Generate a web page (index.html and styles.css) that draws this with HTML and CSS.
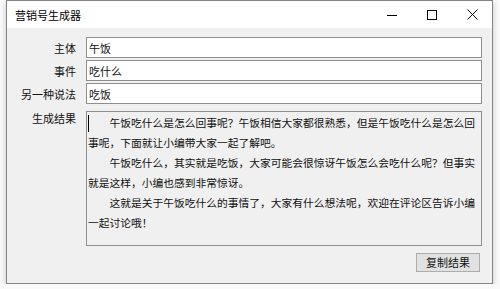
FILE: index.html
```html
<!DOCTYPE html>
<html lang="zh-CN">
<head>
<meta charset="utf-8">
<title>营销号生成器</title>
<link rel="stylesheet" href="styles.css">
</head>
<body>
<div class="window">
  <div class="titlebar">
    <div class="title">营销号生成器</div>
    <div class="controls">
      <div class="ctl"><svg width="10" height="10" viewBox="0 0 10 10"><path d="M0 5.5H10" stroke="#000" stroke-width="1"/></svg></div>
      <div class="ctl"><svg width="10" height="10" viewBox="0 0 10 10"><rect x="0.5" y="0.5" width="9" height="9" fill="none" stroke="#000" stroke-width="1"/></svg></div>
      <div class="ctl"><svg width="11" height="11" viewBox="0 0 11 11"><path d="M0.5 0.5L10.5 10.5M10.5 0.5L0.5 10.5" stroke="#000" stroke-width="1"/></svg></div>
    </div>
  </div>
  <div class="body">
    <div class="form">
      <label class="lbl">主体</label>
      <input class="field" type="text" value="午饭">
      <label class="lbl">事件</label>
      <input class="field" type="text" value="吃什么">
      <label class="lbl">另一种说法</label>
      <input class="field" type="text" value="吃饭">
      <label class="lbl lbl-top">生成结果</label>
      <div class="result">
        <span class="caret"></span>
        <p class="para">　　午饭吃什么是怎么回事呢？午饭相信大家都很熟悉，但是午饭吃什么是怎么回事呢，下面就让小编带大家一起了解吧。</p>
        <p class="para">　　午饭吃什么，其实就是吃饭，大家可能会很惊讶午饭怎么会吃什么呢？但事实就是这样，小编也感到非常惊讶。</p>
        <p class="para">　　这就是关于午饭吃什么的事情了，大家有什么想法呢，欢迎在评论区告诉小编一起讨论哦！</p>
      </div>
    </div>
    <div class="actions">
      <button class="btn" type="button">复制结果</button>
    </div>
  </div>
</div>
</body>
</html>
```

FILE: styles.css
```css
html, body {
  margin: 0;
  padding: 0;
  background: #fafafa;
}
body {
  font-family: "Noto Sans CJK SC", "Noto Sans", sans-serif;
  color: #111;
}
.window {
  margin-left: 6px;
  width: 485px;
  height: 282px;
  border: 1px solid #858585;
  background: #f0f0f0;
  box-shadow: 0 2px 6px rgba(0, 0, 0, 0.22);
  display: flex;
  flex-direction: column;
}
.titlebar {
  height: 27px;
  background: #ffffff;
  display: flex;
  align-items: center;
  justify-content: space-between;
}
.title {
  padding-left: 8px;
  font-size: 11px;
  line-height: 14px;
  color: #000;
}
.controls {
  display: flex;
  height: 100%;
}
.ctl {
  width: 40px;
  height: 100%;
  display: flex;
  align-items: center;
  justify-content: center;
}
.ctl svg {
  display: block;
}
.body {
  padding: 9px 10px 10px 0;
  display: flex;
  flex-direction: column;
}
.form {
  display: grid;
  grid-template-columns: 69px 396px;
  column-gap: 10px;
  row-gap: 2px;
}
.lbl {
  font-size: 11px;
  line-height: 14px;
  text-align: right;
  align-self: center;
  color: #111;
}
.lbl-top {
  align-self: start;
  margin-top: 5px;
}
.field {
  box-sizing: border-box;
  height: 21px;
  width: 396px;
  margin: 0;
  border: 1px solid #8e8e8e;
  background: #fff;
  padding: 0 2px;
  font-family: "Noto Sans CJK SC", "Noto Sans", sans-serif;
  font-size: 11px;
  color: #111;
  outline: none;
}
.result {
  position: relative;
  box-sizing: border-box;
  margin-top: 5px;
  height: 135px;
  width: 396px;
  border: 1px solid #8e8e8e;
  background: #f0f0f0;
  padding: 1px 1px 0 1px;
  font-size: 10.75px;
  line-height: 20px;
  overflow: hidden;
}
.para {
  margin: 0;
  width: 36.4em;
}
.caret {
  position: absolute;
  left: 1px;
  top: 3px;
  width: 1px;
  height: 17px;
  background: #000;
}
.actions {
  margin-top: 7px;
  display: flex;
  justify-content: flex-end;
  padding-right: 2px;
}
.btn {
  box-sizing: border-box;
  width: 64px;
  height: 19px;
  margin: 0;
  padding: 0;
  border: 1px solid #adadad;
  background: #e1e1e1;
  font-family: "Noto Sans CJK SC", "Noto Sans", sans-serif;
  font-size: 11px;
  line-height: 17px;
  color: #111;
}
```
